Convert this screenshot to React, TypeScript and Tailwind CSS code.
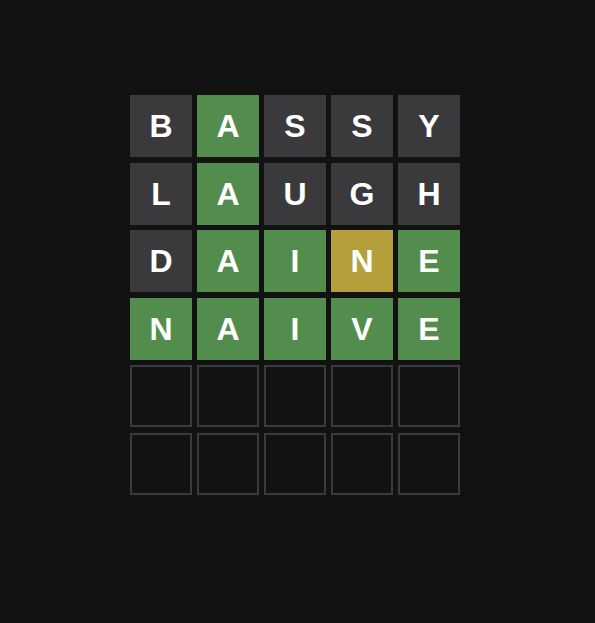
const rows: [string, string][] = [
  ["BASSY", "xgxxx"],
  ["LAUGH", "xgxxx"],
  ["DAINE", "xggyg"],
  ["NAIVE", "ggggg"],
  ["     ", "eeeee"],
  ["     ", "eeeee"],
];

function tileClass(s: string) {
  if (s === "g") return "bg-[#538d4e]";
  if (s === "y") return "bg-[#b59f3b]";
  if (s === "x") return "bg-[#3a3a3c]";
  return "border-2 border-[#3a3a3c]";
}

export default function App() {
  return (
    <div className="min-h-[623px] w-full bg-[#121213] pt-[95px] pl-[130px] font-['Liberation_Sans',Arial,sans-serif]">
      <div className="grid w-[330px] grid-cols-5 gap-x-[5px] gap-y-[5.6px]">
        {rows.map(([word, state], r) =>
          word.split("").map((ch, i) => (
            <div
              key={r + "-" + i}
              className={`flex h-[62px] w-[62px] items-center justify-center text-[32px] font-bold text-white ${tileClass(state[i])}`}
            >
              {ch.trim()}
            </div>
          ))
        )}
      </div>
    </div>
  );
}
